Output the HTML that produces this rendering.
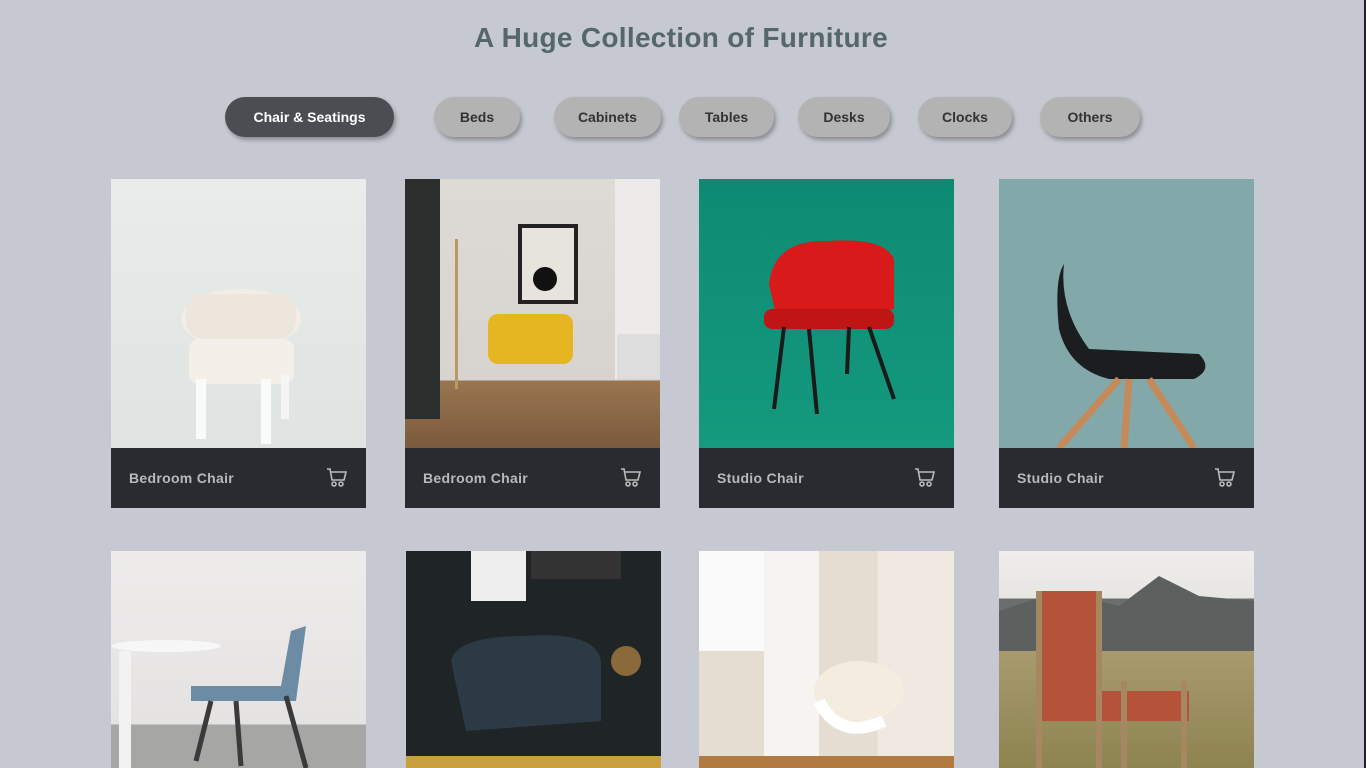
<!DOCTYPE html>
<html><head><meta charset="utf-8"><style>
*{margin:0;padding:0;box-sizing:border-box}
html,body{width:1366px;height:768px;overflow:hidden}
body{background:#c6c9d1;font-family:"Liberation Sans",sans-serif;position:relative}
.edge{position:absolute;right:0;top:0;width:2px;height:768px;background:#222}
h1{position:absolute;top:22px;left:0;width:1362px;text-align:center;font-size:28px;font-weight:bold;color:#55676a;letter-spacing:0.3px}
.pill{position:absolute;top:97px;height:40px;border-radius:20px;background:#b3b3b3;color:#333;font-size:14px;font-weight:bold;display:flex;align-items:center;justify-content:center;box-shadow:2px 3px 4px rgba(0,0,0,.3)}
.pill.on{background:#4a4e52;color:#fff}
.card{position:absolute;width:255px;overflow:hidden}
.img{height:269px;position:relative;overflow:hidden}
.r2 .img{height:217px}
.foot{height:60px;background:#282b30;display:flex;align-items:center;justify-content:space-between;padding:0 18px}
.foot span{color:#b9b9b9;font-weight:bold;font-size:14px;letter-spacing:.3px}
svg{display:block}
</style></head><body>
<div class="edge"></div>
<h1>A Huge Collection of Furniture</h1>
<div class="pill on" style="left:225px;width:169px">Chair &amp; Seatings</div>
<div class="pill" style="left:434px;width:86px">Beds</div>
<div class="pill" style="left:554px;width:107px">Cabinets</div>
<div class="pill" style="left:679px;width:95px">Tables</div>
<div class="pill" style="left:798px;width:92px">Desks</div>
<div class="pill" style="left:918px;width:94px">Clocks</div>
<div class="pill" style="left:1040px;width:100px">Others</div>

<div class="card" style="left:111px;top:179px">
<div class="img" style="background:linear-gradient(#e8ecea,#dfe3e1)">
<svg width="255" height="269"><ellipse cx="130" cy="140" rx="60" ry="30" fill="#f2ede6"/><rect x="75" y="115" width="110" height="45" rx="18" fill="#ece6dc"/><rect x="78" y="160" width="105" height="45" rx="10" fill="#f4efe8"/><rect x="85" y="200" width="10" height="60" fill="#fafafa"/><rect x="150" y="200" width="10" height="65" fill="#fafafa"/><rect x="170" y="195" width="8" height="45" fill="#f5f5f5"/></svg>
</div><div class="foot"><span>Bedroom Chair</span><svg width="22" height="20" viewBox="0 0 22 20" fill="none" stroke="#bbb" stroke-width="1.6"><path d="M1 1h3l2 11h12l2-8H5"/><circle cx="8" cy="16" r="2"/><circle cx="15" cy="16" r="2"/></svg></div></div>

<div class="card" style="left:405px;top:179px">
<div class="img" style="background:linear-gradient(#dedbd6 0,#d7d3ce 75%,#9a7550 75%,#7a5a3d 100%)">
<svg width="255" height="269"><rect x="0" y="0" width="35" height="240" fill="#2a2e2c"/><rect x="210" y="0" width="45" height="200" fill="#ecebea"/><rect x="113" y="45" width="60" height="80" fill="#222"/><rect x="117" y="49" width="52" height="72" fill="#e7e4de"/><circle cx="140" cy="100" r="12" fill="#111"/><rect x="50" y="60" width="3" height="150" fill="#b89a60"/><rect x="83" y="135" width="85" height="50" rx="10" fill="#e6b522"/><rect x="212" y="155" width="43" height="45" fill="#ddd"/></svg>
</div><div class="foot"><span>Bedroom Chair</span><svg width="22" height="20" viewBox="0 0 22 20" fill="none" stroke="#bbb" stroke-width="1.6"><path d="M1 1h3l2 11h12l2-8H5"/><circle cx="8" cy="16" r="2"/><circle cx="15" cy="16" r="2"/></svg></div></div>

<div class="card" style="left:699px;top:179px">
<div class="img" style="background:linear-gradient(#0e8a73,#149a7e)">
<svg width="255" height="269"><path d="M70 105 Q75 60 130 62 Q185 58 195 80 L195 130 L80 150 Z" fill="#d81a1a"/><rect x="65" y="130" width="130" height="20" rx="8" fill="#c01515"/><path d="M85 148 L75 230 M110 150 L118 235 M170 148 L195 220 M150 148 L148 195" stroke="#1a1a1a" stroke-width="4"/></svg>
</div><div class="foot"><span>Studio Chair</span><svg width="22" height="20" viewBox="0 0 22 20" fill="none" stroke="#bbb" stroke-width="1.6"><path d="M1 1h3l2 11h12l2-8H5"/><circle cx="8" cy="16" r="2"/><circle cx="15" cy="16" r="2"/></svg></div></div>

<div class="card" style="left:999px;top:179px">
<div class="img" style="background:#83a8aa">
<svg width="255" height="269"><path d="M65 85 Q60 130 90 170 L200 175 Q215 190 195 200 L110 200 Q70 190 60 150 Q55 100 65 85 Z" fill="#1b1d1f"/><path d="M120 200 L60 269 M130 200 L125 269 M150 200 L195 269" stroke="#c48a5a" stroke-width="7"/></svg>
</div><div class="foot"><span>Studio Chair</span><svg width="22" height="20" viewBox="0 0 22 20" fill="none" stroke="#bbb" stroke-width="1.6"><path d="M1 1h3l2 11h12l2-8H5"/><circle cx="8" cy="16" r="2"/><circle cx="15" cy="16" r="2"/></svg></div></div>

<div class="card r2" style="left:111px;top:551px;height:217px">
<div class="img" style="background:linear-gradient(#edeceb 0,#e5e3e2 80%,#a6a6a4 80%)">
<svg width="255" height="217"><ellipse cx="55" cy="95" rx="55" ry="6" fill="#f7f7f7"/><rect x="8" y="100" width="12" height="117" fill="#f2f2f2"/><path d="M180 80 L195 75 L185 150 L80 150 L80 135 L170 135 Z" fill="#6c8ca6"/><path d="M100 150 L85 210 M125 150 L130 215 M175 145 L195 217" stroke="#3a3a3a" stroke-width="5"/></svg>
</div></div>

<div class="card r2" style="left:406px;top:551px;height:217px">
<div class="img" style="background:#1f2427">
<svg width="255" height="217"><rect x="65" y="0" width="55" height="50" fill="#eee"/><rect x="125" y="0" width="90" height="28" fill="#333"/><path d="M45 110 Q50 85 120 85 Q190 80 195 110 L195 170 L60 180 Z" fill="#2c3a46"/><rect x="0" y="205" width="255" height="12" fill="#c8a040"/><circle cx="220" cy="110" r="15" fill="#8a6a3a"/></svg>
</div></div>

<div class="card r2" style="left:699px;top:551px;height:217px">
<div class="img" style="background:linear-gradient(90deg,#e5ddd2 0,#e5ddd2 70%,#efe9e1 70%)">
<svg width="255" height="217"><rect x="0" y="0" width="75" height="100" fill="#fafafa"/><rect x="65" y="0" width="55" height="217" fill="#f5f4f0"/><ellipse cx="160" cy="140" rx="45" ry="30" fill="#f3ecdf"/><path d="M120 150 Q140 190 185 170" stroke="#fff" stroke-width="12" fill="none"/><rect x="0" y="205" width="255" height="12" fill="#b07a40"/></svg>
</div></div>

<div class="card r2" style="left:999px;top:551px;height:217px">
<div class="img" style="background:linear-gradient(#f0eeec 0,#e8e6e3 22%,#6a6e6d 22%,#6a6e6d 45%,#a99b6e 45%,#8d8350 100%)">
<svg width="255" height="217"><path d="M0 60 L60 40 L120 55 L160 25 L200 45 L255 50 L255 100 L0 100 Z" fill="#5c615f"/><rect x="40" y="40" width="60" height="120" fill="#b4523a"/><rect x="40" y="140" width="150" height="30" fill="#b4523a"/><path d="M40 40 L40 217 M100 40 L100 217 M125 130 L125 217 M185 130 L185 217" stroke="#a58762" stroke-width="6"/></svg>
</div></div>
</body></html>
